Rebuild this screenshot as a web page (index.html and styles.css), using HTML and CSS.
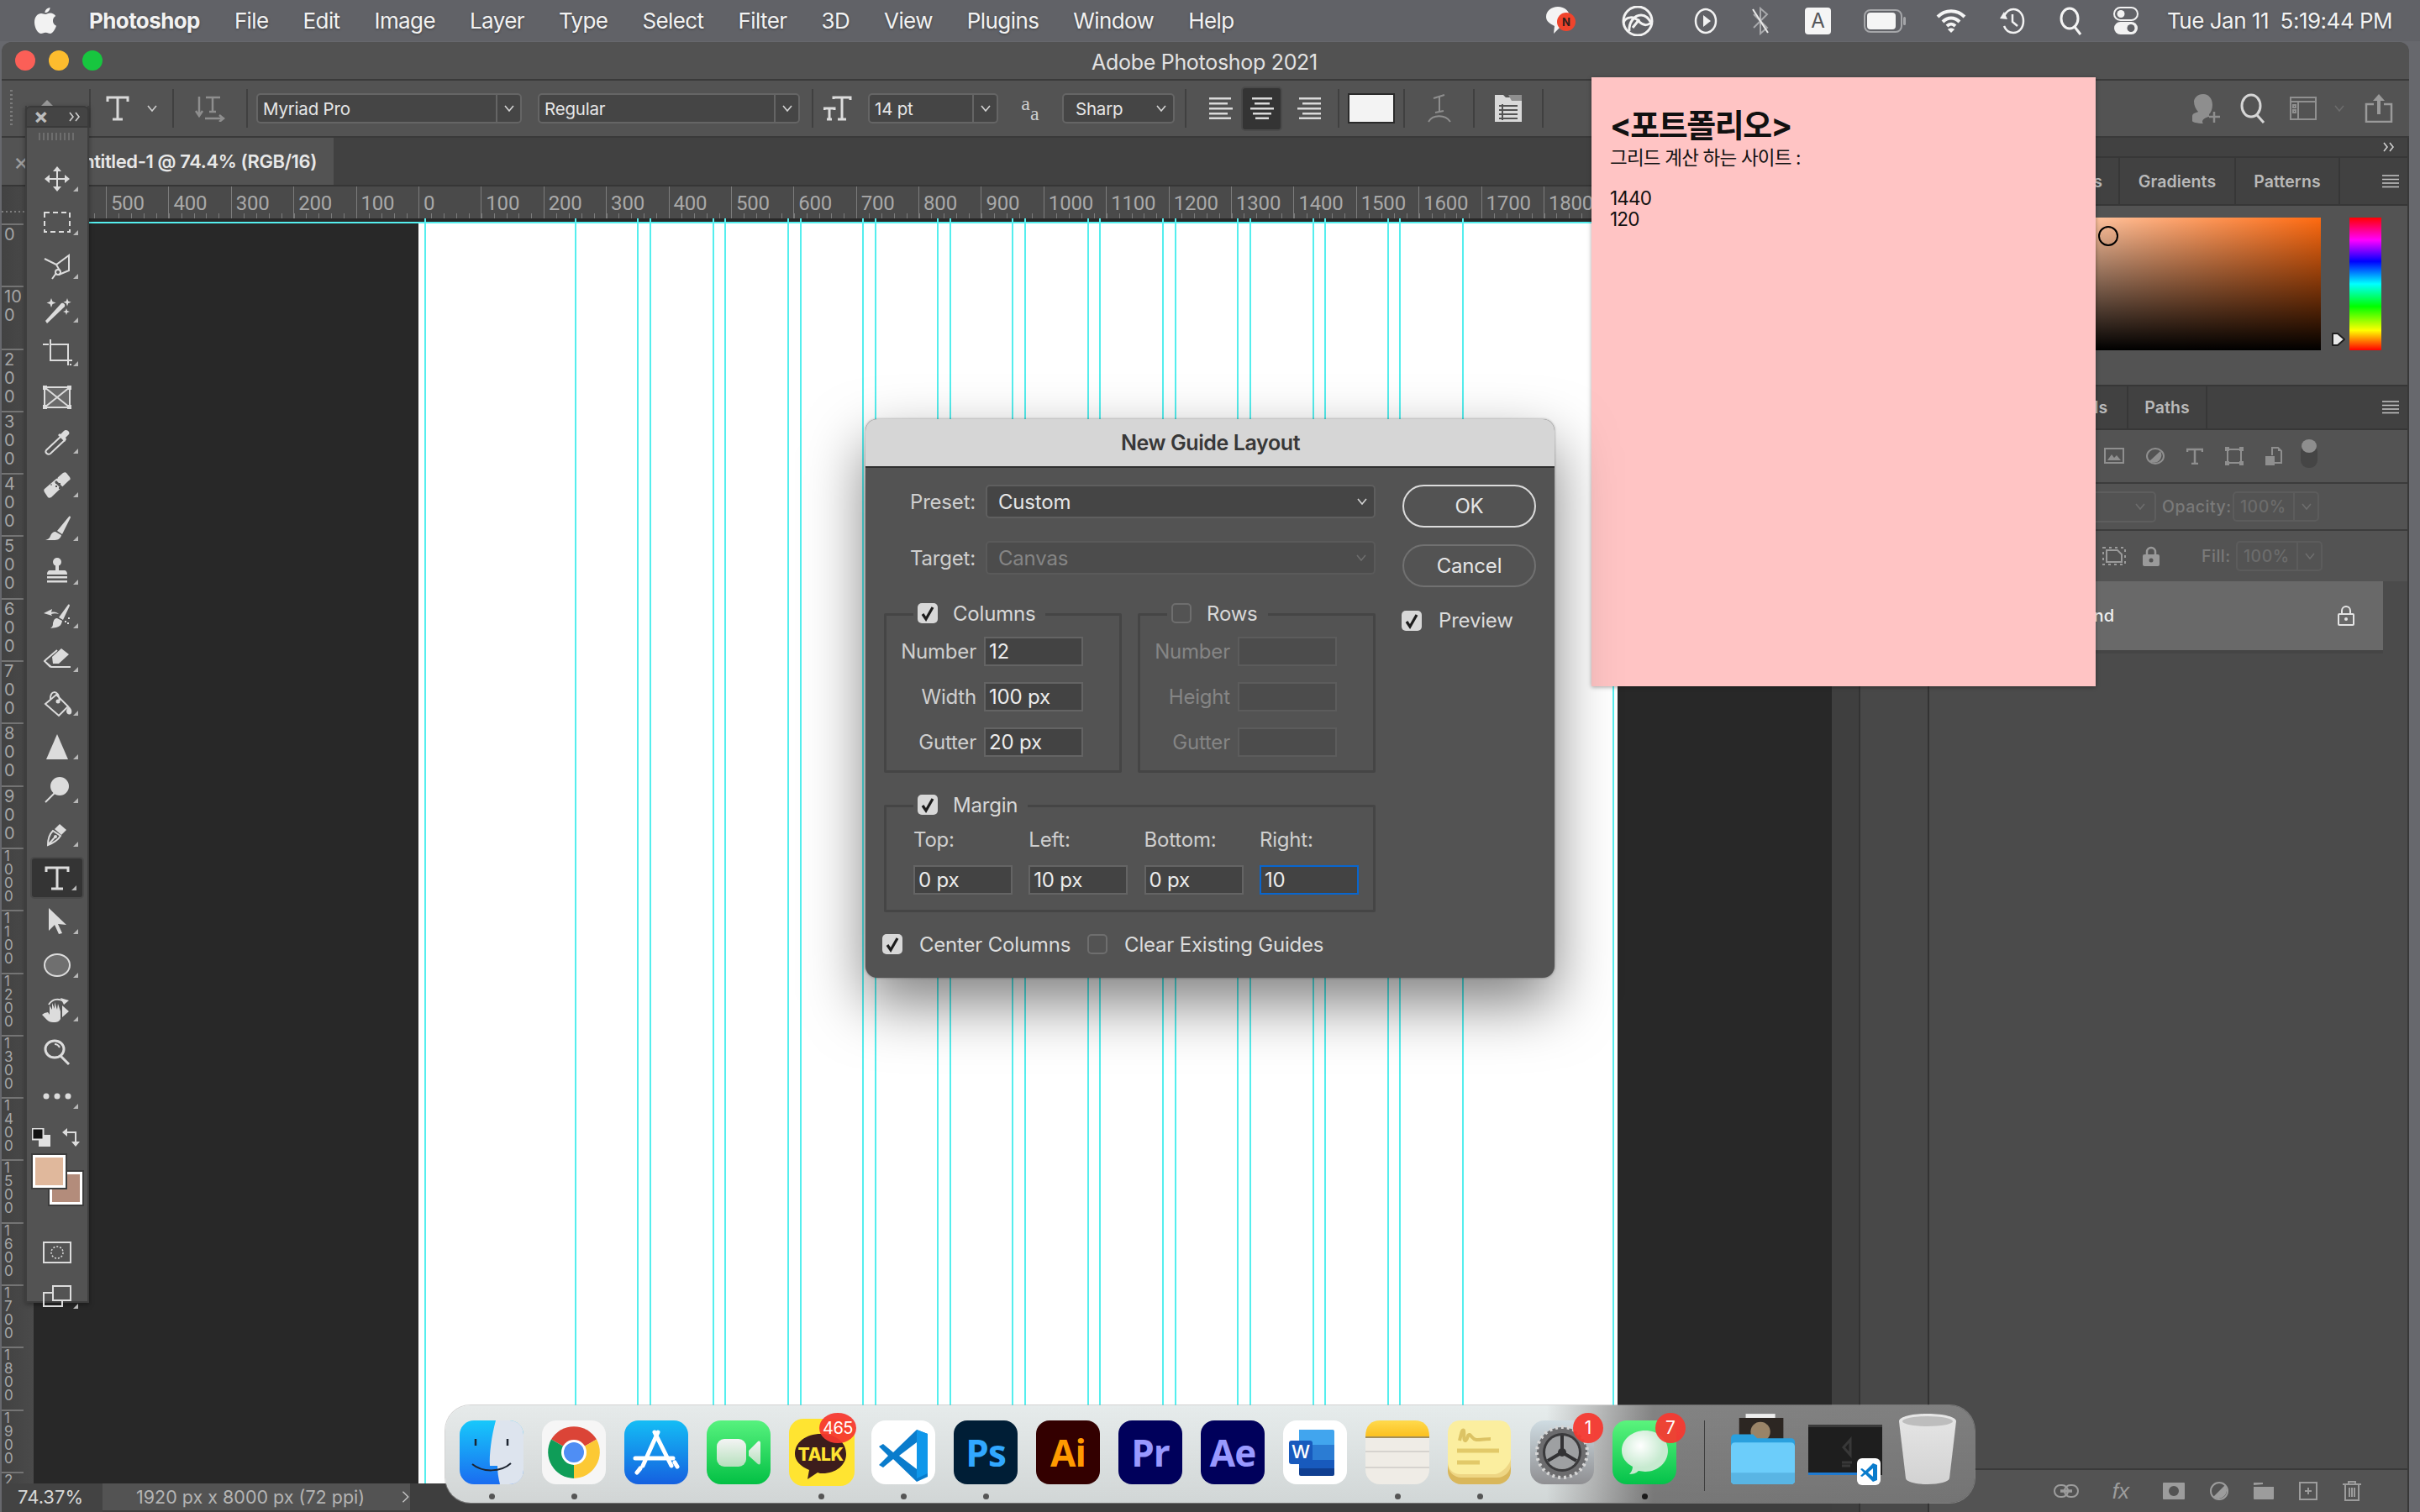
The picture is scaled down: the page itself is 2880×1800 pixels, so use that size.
FILE: index.html
```html
<!DOCTYPE html>
<html lang="en">
<head>
<meta charset="utf-8">
<title>Adobe Photoshop 2021</title>
<link rel="stylesheet" href="styles.css">
</head>
<body>
<header class="menubar">
  <svg class="apple" width="28" height="34" viewBox="0 0 28 34"><path fill="#f2f2f2" d="M19.5 1c.2 3-2.6 6.400-6 6.200C13.200 4.200 16.300 1.200 19.500 1zM14 9c1.500 0 3.300-1.500 6-1.500 2.200 0 4.800 1.200 6.200 3.500-4.800 2.800-4 9.800.8 11.800-1.200 3.500-4.200 9.200-7.200 9.200-1.900 0-2.800-1.300-5.500-1.300s-3.600 1.300-5.400 1.300C5 32 1 25 1 18.500 1 12 5 8 9 8c2 0 3.600 1 5 1z"/></svg>
  <nav class="menu">
    <b>Photoshop</b><span>File</span><span>Edit</span><span>Image</span><span>Layer</span><span>Type</span><span>Select</span><span>Filter</span><span>3D</span><span>View</span><span>Plugins</span><span>Window</span><span>Help</span>
  </nav>
  <div class="status-icons">
    <svg class="si" width="38" height="36" viewBox="0 0 38 36"><path fill="#f4f4f4" d="M16 1c8 0 14 5 14 12s-5 12-12 13l-7 7 1-9C6 21 2 18 2 13 2 6 8 1 16 1z"/><circle cx="26" cy="19" r="11" fill="#f0442c"/><text x="26" y="24" class="badge-n">N</text></svg>
    <svg class="si cc" width="40" height="36" viewBox="0 0 40 36" fill="none" stroke="#f2f2f2" stroke-width="3"><circle cx="20" cy="18" r="17"/><path d="M3 20c3-8 13-8 19-1 5 5 11 5 15-1M10 30c-1-10 6-19 14-19 6 0 9 4 12 9M14 26l8-10"/></svg>
    <svg class="si play" width="28" height="34" viewBox="0 0 28 34" fill="none" stroke="#f2f2f2" stroke-width="2.500"><ellipse cx="14" cy="17" rx="12" ry="14"/><path fill="#f2f2f2" stroke="none" d="M11 10l9 7-9 7z"/></svg>
    <svg class="si bt" width="22" height="34" viewBox="0 0 22 34" fill="none" stroke="#a8a9ac" stroke-width="2"><path d="M3 9l16 16-8 7V2l8 7L3 25"/><path stroke="#e8e8e8" d="M2 3l18 28"/></svg>
    <div class="si akey">A</div>
    <svg class="si batt" width="52" height="30" viewBox="0 0 52 30"><rect x="1" y="2" width="44" height="26" rx="7" fill="none" stroke="#a5a6a9" stroke-width="2"/><rect x="4" y="5" width="34" height="20" rx="4" fill="#f5f5f5"/><rect x="47" y="10" width="3" height="10" rx="1.500" fill="#a5a6a9"/></svg>
    <svg class="si wifi" width="36" height="30" viewBox="0 0 36 30" fill="none" stroke="#f4f4f4" stroke-width="4"><path d="M2 10C11 1 25 1 34 10M8 16c6-6 14-6 20 0M13 21c3-3 7-3 10 0"/><path fill="#f4f4f4" stroke="none" d="M18 29l-4-4c2-2 6-2 8 0z"/></svg>
    <svg class="si hist" width="30" height="34" viewBox="0 0 30 34" fill="none" stroke="#f2f2f2" stroke-width="2.500"><path d="M5 11C8 5 12 3 16 3c7 0 12 6 12 14s-5 14-12 14c-5 0-9-3-11-8"/><path d="M15 9v9l6 5"/><path fill="#f2f2f2" stroke="none" d="M0 14l9 1-4-9z"/></svg>
    <svg class="si srch" width="28" height="34" viewBox="0 0 28 34" fill="none" stroke="#f4f4f4" stroke-width="3"><ellipse cx="12" cy="14" rx="10" ry="12"/><path d="M18 24l7 9"/></svg>
    <svg class="si ctl" width="30" height="34" viewBox="0 0 30 34"><rect x="1" y="1" width="28" height="15" rx="7.500" fill="none" stroke="#f2f2f2" stroke-width="2"/><circle cx="9" cy="8.500" r="4.500" fill="#f2f2f2"/><rect x="1" y="18" width="28" height="15" rx="7.500" fill="#f2f2f2"/><circle cx="21" cy="25.500" r="4.500" fill="#5f6065"/></svg>
    <time class="clock">Tue Jan 11&nbsp;&nbsp;5:19:44 PM</time>
  </div>
</header>

<section class="window">
  <div class="titlebar">
    <i class="light red"></i><i class="light yellow"></i><i class="light green"></i>
    <div class="win-title">Adobe Photoshop 2021</div>
  </div>

  <div class="options">
    <div class="grip"></div>
    <svg class="oc" width="28" height="28" viewBox="0 0 28 28"><path fill="#9a9a9a" d="M14 4l12 12H2z"/><path fill="#9a9a9a" d="M6 16h16v10H6z"/></svg>
    <i class="osep"></i>
    <svg class="oc" width="30" height="30" viewBox="0 0 30 30" fill="none" stroke="#d9d9d9" stroke-width="3"><path d="M3 7V2h24v5M15 2v26M9 28h12"/></svg>
    <svg class="oc" width="12" height="9" viewBox="0 0 12 9" fill="none" stroke="#cfcfcf" stroke-width="1.600"><path d="M1 1l5 6 5-6"/></svg>
    <i class="osep"></i>
    <svg class="oc" width="36" height="32" viewBox="0 0 36 32" fill="none" stroke="#8e8e8e" stroke-width="2.500"><path d="M13 3h17M21 3v17M17 20h8M5 2v22M1 19l4 6 4-6M12 28h22M29 24l5 4-5 4"/></svg>
    <i class="osep flush"></i>
    <div class="osel grow"><span>Myriad Pro</span><em><svg class="chev"><use href="#chev"/></svg></em></div>
    <div class="osel style"><span>Regular</span><em><svg class="chev"><use href="#chev"/></svg></em></div>
    <i class="osep"></i>
    <svg class="oc" width="34" height="30" viewBox="0 0 34 30" fill="none" stroke="#dcdcdc" stroke-width="3"><path d="M12 4V2h20v3M22 2v26M17 28h10M1 17v-2h12v2M7 15v13M4 28h6"/></svg>
    <div class="osel size"><span>14 pt</span><em><svg class="chev"><use href="#chev"/></svg></em></div>
    <div class="aa oc"><span>a</span><span>a</span></div>
    <div class="osel sharp"><span>Sharp</span><svg class="chev"><use href="#chev"/></svg></div>
    <i class="osep"></i>
    <div class="alg left"><svg width="28" height="26" viewBox="0 0 28 26" fill="#dadada"><path d="M0 0h26v2.500H0zM0 6h22v2.500H0zM0 12h28v2.500H0zM0 18h22v2.500H0zM0 23.500h26V26H0z"/></svg></div>
    <div class="alg on"><svg width="28" height="26" viewBox="0 0 28 26" fill="#dadada"><path d="M2 0h24v2.500H2zM5 6h18v2.500H5zM0 12h28v2.500H0zM3 18h22v2.500H3zM6 23.500h16V26H6z"/></svg></div>
    <div class="alg"><svg width="28" height="26" viewBox="0 0 28 26" fill="#dadada"><path d="M2 0h26v2.500H2zM6 6h22v2.500H6zM0 12h28v2.500H0zM6 18h22v2.500H6zM2 23.500h26V26H2z"/></svg></div>
    <i class="osep"></i>
    <div class="swatch"></div>
    <i class="osep"></i>
    <svg class="oc" width="30" height="34" viewBox="0 0 30 34" fill="none" stroke="#8e8e8e" stroke-width="2"><path d="M8 5l13-4M15 3v18M10 22l10-2M2 33c5-9 20-9 26 0"/></svg>
    <i class="osep flush"></i>
    <svg class="oc" width="32" height="32" viewBox="0 0 32 32"><path fill="#d9d9d9" d="M0 0h10l3 3h19v29H0z"/><path fill="#8f8f8f" d="M16 0h16v7H20z"/><path stroke="#535353" stroke-width="2" d="M5 13h22M5 18h22M5 23h22M5 28h22M9 11v19"/></svg>
    <i class="osep flush"></i>
    <div></div>
    <svg class="oc" width="36" height="36" viewBox="0 0 36 36"><path fill="#8e8e8e" d="M15 1c7 0 11 6 11 13 0 5-2 9-4 11v3c-6 1-10 5-7 8-8 0-13-2-13-3v-6c0-3 5-4 7-5-3-3-5-8-5-12C4 6 8 1 15 1z"/><path stroke="#8e8e8e" stroke-width="2.500" d="M28 22v13M22 28h13"/></svg>
    <svg class="oc" width="30" height="36" viewBox="0 0 30 36" fill="none" stroke="#d6d6d6" stroke-width="3"><ellipse cx="13" cy="15" rx="11" ry="13"/><path d="M20 26l8 9"/></svg>
    <svg class="oc" width="32" height="28" viewBox="0 0 32 28" fill="none" stroke="#909090" stroke-width="2"><rect x="1" y="1" width="30" height="26"/><path d="M1 6h30M10 6v21M4 10h3v3H4zM4 16h3v3H4z"/></svg>
    <svg class="oc" width="12" height="8" viewBox="0 0 12 8" fill="none" stroke="#6d6d6d" stroke-width="1.600"><path d="M1 1l5 6 5-6"/></svg>
    <svg class="oc" width="34" height="34" viewBox="0 0 34 34" fill="none" stroke="#9a9a9a" stroke-width="2.500"><path d="M11 12H2v21h30V12h-9"/><path fill="#9a9a9a" stroke="none" d="M17 0l7 8h-5v16h-4V8h-5z"/></svg>
  </div>

  <div class="under">
    <div class="doc">
      <div class="tabrow">
        <div class="doctab"><span class="tabx">×</span><span class="tabname">Untitled-1 @ 74.4% (RGB/16)</span></div>
      </div>
      <div class="ruler-top">
        <div class="corner"></div>
        <div class="hruler">
          <span>600</span><span>500</span><span>400</span><span>300</span><span>200</span><span>100</span><span>0</span><span>100</span><span>200</span><span>300</span><span>400</span><span>500</span><span>600</span><span>700</span><span>800</span><span>900</span><span>1000</span><span>1100</span><span>1200</span><span>1300</span><span>1400</span><span>1500</span><span>1600</span><span>1700</span><span>1800</span><span>1900</span>
        </div>
      </div>
      <div class="doc-main">
        <div class="vruler">
          <span>0</span><span>100</span><span>200</span><span>300</span><span>400</span><span>500</span><span>600</span><span>700</span><span>800</span><span>900</span><span class="four">1000</span><span class="four">1100</span><span class="four">1200</span><span class="four">1300</span><span class="four">1400</span><span class="four">1500</span><span class="four">1600</span><span class="four">1700</span><span class="four">1800</span><span class="four">1900</span><span class="four">2000</span>
        </div>
        <div class="canvas">
          <div class="page"></div>
          <i class="hguide"></i>
          <i class="guide" style="left:465px"></i><i class="guide" style="left:644px"></i><i class="guide" style="left:718px"></i><i class="guide" style="left:733px"></i><i class="guide" style="left:808px"></i><i class="guide" style="left:822px"></i><i class="guide" style="left:897px"></i><i class="guide" style="left:912px"></i><i class="guide" style="left:986px"></i><i class="guide" style="left:1001px"></i><i class="guide" style="left:1075px"></i><i class="guide" style="left:1090px"></i><i class="guide" style="left:1164px"></i><i class="guide" style="left:1179px"></i><i class="guide" style="left:1254px"></i><i class="guide" style="left:1268px"></i><i class="guide" style="left:1343px"></i><i class="guide" style="left:1358px"></i><i class="guide" style="left:1432px"></i><i class="guide" style="left:1447px"></i><i class="guide" style="left:1522px"></i><i class="guide" style="left:1536px"></i><i class="guide" style="left:1611px"></i><i class="guide" style="left:1625px"></i><i class="guide" style="left:1700px"></i><i class="guide" style="left:1879px"></i>
        </div>
      </div>
      <div class="statusbar">
        <span class="zoomval">74.37%</span>
        <span class="docinfo">1920 px x 8000 px (72 ppi)<svg width="14" height="22" viewBox="0 0 14 22" fill="none" stroke="#c4c4c4" stroke-width="2"><path d="M2 2l9 9-9 9"/></svg></span>
      </div>
    </div>
    <div class="dock-a"></div>
    <div class="dock-b"></div>
    <div class="panels">
      <div class="collapse-bar"><svg width="14" height="14" viewBox="0 0 14 14" fill="none" stroke="#cfcfcf" stroke-width="1.600"><path d="M1 2l4 5-4 5M8 2l4 5-4 5"/></svg></div>
      <div class="ptabs first">
        <span class="t-color">Color</span><span class="t-swatch">Swatches</span><span class="t-grad">Gradients</span><span class="t-pat">Patterns</span>
        <svg class="burger"><use href="#burger"/></svg>
      </div>
      <div class="colorpanel">
        <div class="picker"><i class="pick-dot"></i></div>
        <div class="huewrap">
          <svg class="hue-arrow" width="18" height="18" viewBox="0 0 18 18"><path fill="#e8e8e8" stroke="#1f1f1f" stroke-width="2" stroke-linejoin="round" d="M2 2h6l8 7-8 7H2z"/></svg>
          <div class="hue"></div>
        </div>
      </div>
      <div class="ptabs second">
        <span class="t-layers">Layers</span><span class="t-chan">Channels</span><span class="t-paths">Paths</span>
        <svg class="burger"><use href="#burger"/></svg>
      </div>
      <div class="filter-row">
        <svg class="fic" width="24" height="20" viewBox="0 0 24 20"><rect x="1" y="1" width="22" height="17" fill="none" stroke="#8f8f8f" stroke-width="2"/><path fill="#8f8f8f" d="M4 15l5-7 3 4 3-3 5 6z"/></svg>
        <svg class="fic" width="22" height="20" viewBox="0 0 22 20"><ellipse cx="11" cy="10" rx="10" ry="9" fill="none" stroke="#8f8f8f" stroke-width="2"/><path fill="#8f8f8f" d="M17 4a9 9 0 0 1-13 12z"/></svg>
        <svg class="fic" width="20" height="20" viewBox="0 0 20 20" fill="none" stroke="#8f8f8f" stroke-width="2.500"><path d="M1 5V2h18v3M10 2v17M6 19h8"/></svg>
        <svg class="fic" width="22" height="22" viewBox="0 0 22 22" fill="none" stroke="#8f8f8f" stroke-width="2"><rect x="3" y="3" width="16" height="16"/><path fill="#8f8f8f" stroke="none" d="M0 0h5v5H0zM17 0h5v5h-5zM0 17h5v5H0zM17 17h5v5h-5z"/></svg>
        <svg class="fic" width="20" height="22" viewBox="0 0 20 22"><path fill="none" stroke="#8f8f8f" stroke-width="2" d="M8 10V1h7l4 4v14h-8"/><path fill="#8f8f8f" d="M0 11h11v11H0zM15 1l4 4h-4z"/></svg>
        <div class="pill-toggle"><i></i></div>
      </div>
      <div class="blend-row">
        <div class="blend-sel"><svg class="chev dim"><use href="#chev"/></svg></div>
        <span class="dim-label">Opacity:</span>
        <div class="pct"><span>100%</span><em><svg class="chev dim"><use href="#chev"/></svg></em></div>
      </div>
      <div class="lock-row">
        <svg class="lk1" width="28" height="22" viewBox="0 0 28 22" fill="none" stroke="#9a9a9a" stroke-width="2"><path d="M5 4h13l5 5v9H5z"/><path stroke-dasharray="3 4" d="M1 1h26v20H1z"/></svg>
        <svg class="lk2" width="20" height="24" viewBox="0 0 20 24"><path fill="none" stroke="#9a9a9a" stroke-width="2.500" d="M5 11V7a5 5 0 0 1 10 0v4"/><rect y="10" width="20" height="14" rx="2" fill="#9a9a9a"/><circle cx="10" cy="17" r="2.500" fill="#535353"/></svg>
        <span class="dim-label fill-l">Fill:</span>
        <div class="pct"><span>100%</span><em><svg class="chev dim"><use href="#chev"/></svg></em></div>
      </div>
      <div class="layer-list">
        <div class="layer-row">
          <span class="layer-name">Background</span>
          <svg width="20" height="24" viewBox="0 0 20 24"><path fill="none" stroke="#e4e4e4" stroke-width="2" d="M5 10V6a5 5 0 0 1 10 0v4"/><rect x="1" y="10" width="18" height="13" rx="1" fill="none" stroke="#e4e4e4" stroke-width="2"/><circle cx="10" cy="16" r="2" fill="#e4e4e4"/></svg>
        </div>
      </div>
      <div class="panel-foot">
        <svg width="30" height="16" viewBox="0 0 30 16" fill="none" stroke="#9c9c9c" stroke-width="2"><rect x="1" y="1" width="16" height="14" rx="7"/><rect x="13" y="1" width="16" height="14" rx="7"/><path stroke-width="3.500" d="M8 8h14"/></svg>
        <span class="fx">fx</span>
        <svg width="26" height="20" viewBox="0 0 26 20"><rect width="26" height="20" rx="1" fill="#9c9c9c"/><circle cx="13" cy="10" r="6" fill="#535353"/></svg>
        <svg width="22" height="22" viewBox="0 0 22 22"><circle cx="11" cy="11" r="10" fill="none" stroke="#9c9c9c" stroke-width="2"/><path fill="#9c9c9c" d="M18 4a10 10 0 0 1-14 14z"/></svg>
        <svg width="24" height="20" viewBox="0 0 24 20" fill="#9c9c9c"><path d="M0 5h24v14a1 1 0 0 1-1 1H1a1 1 0 0 1-1-1zM0 3V0h11v2z"/></svg>
        <svg width="22" height="22" viewBox="0 0 22 22" fill="none" stroke="#9c9c9c" stroke-width="2"><rect x="1" y="1" width="20" height="20"/><path d="M11 7v8M7 11h8"/></svg>
        <svg width="22" height="24" viewBox="0 0 22 24" fill="none" stroke="#9c9c9c" stroke-width="2"><path d="M0 4h22M7 3V1h8v2M3 4v19h16V4M8 8v11M11 8v11M14 8v11"/></svg>
      </div>
    </div>
  </div>
</section>

<aside class="toolbox">
  <div class="tb-head"><span class="tb-x">×</span><svg width="14" height="14" viewBox="0 0 14 14" fill="none" stroke="#cfcfcf" stroke-width="1.600"><path d="M1 2l4 5-4 5M8 2l4 5-4 5"/></svg></div>
  <div class="tb-grip"></div>
  <div class="tool more"><svg class="ti" viewBox="0 0 36 36"><path d="M18 4v28M4 18h28" class="s"/><path d="M18 3l5 6H13zM18 33l5-6H13zM3 18l6-5v10zM33 18l-6-5v10z"/></svg></div>
  <div class="tool more"><svg class="ti" viewBox="0 0 36 36"><rect x="3" y="6" width="30" height="23" class="s" stroke-dasharray="6 4"/></svg></div>
  <div class="tool more"><svg class="ti" viewBox="0 0 36 36"><path class="s" d="M3 9l14 7L32 5v18l-12 5M17 16l4 7M12 33l5-7"/><circle class="s" cx="19" cy="25" r="3"/></svg></div>
  <div class="tool more"><svg class="ti" viewBox="0 0 36 36"><path d="M4 31l2 3 21-20c1-3-2-5-4-4z"/><path d="M11 4l1.500 4 4 1.500-4 1.500-1.500 4-1.500-4-4-1.500 4-1.500zM30 4l1.200 3.500 3.500 1.200-3.500 1.200L30 13.500l-1.200-3.600-3.500-1.200 3.500-1.200zM29 16l1 3 3 1-3 1-1 3-1-3-3-1 3-1z"/></svg></div>
  <div class="tool more"><svg class="ti" viewBox="0 0 36 36"><path class="s" d="M1 7h7M10 1v25h24M34 32v-2M10 7h21v25M36 26h-6"/></svg></div>
  <div class="tool"><svg class="ti" viewBox="0 0 36 36"><path fill="#6a6a6a" d="M3 6h30v24H3z"/><path class="s" d="M3 6h30v24H3zM3 6l30 24M33 6L3 30"/><path d="M1 4h5v5H1zM30 4h5v5h-5zM1 27h5v5H1zM30 27h5v5h-5z"/></svg></div>
  <div class="tool more"><svg class="ti" viewBox="0 0 36 36"><path class="s" d="M22 13L5 29c-2 3 2 6 5 4l17-16"/><path d="M19 11l8 8 2-3-1-2 4-4c2-3-3-7-6-4l-4 4-1-1z"/></svg></div>
  <div class="tool more"><svg class="ti" viewBox="0 0 36 36"><path d="M3 23L25 4c2-1 3-1 4 0l4 5c1 2 1 3-1 4L11 33c-2 1-3 1-4 0l-4-6c-1-2-1-3 0-4z"/><path fill="#535353" d="M15 15l2-2 9 9-2 2zM10 18l1-1 1 1-1 1zM17 10l1-1 1 1-1 1z"/><path d="M16 19h2v2h-2zM20 16h2v2h-2zM20 21h2v2h-2zM16 15h2v2h-2z" fill="#535353"/></svg></div>
  <div class="tool more"><svg class="ti" viewBox="0 0 36 36"><path d="M18 21L32 4c1-1 2 0 2 1L24 25zM16 22l7 4c-1 5-5 6-9 6H4c3-1 5-2 6-5 1-3 3-5 6-5z"/></svg></div>
  <div class="tool more"><svg class="ti" viewBox="0 0 36 36"><circle cx="18" cy="6" r="5"/><path d="M16 10h4v6h6c3 0 4 2 4 5H6c0-3 1-5 4-5h6zM6 23h24v2.500H6zM6 28h24v2.500H6z"/></svg></div>
  <div class="tool more"><svg class="ti" viewBox="0 0 36 36"><path d="M20 20L31 5c1-1 2 0 2 1l-8 17zM18 21l6 3c-1 6-4 7-7 8l-7 1c3-2 3-4 3-6 1-4 2-6 5-6zM2 15l10-5-1 4c4-1 7 0 9 2-3-1-6-1-9 0l1 2z"/><path d="M27 24h2v2h-2zM31 20h2v2h-2zM30 26h2v2h-2z"/></svg></div>
  <div class="tool more"><svg class="ti" viewBox="0 0 36 36"><path d="M12 15l11-10 9 7-12 11H13z" /><path class="s" d="M5 18L18 7M4 21l7 6h23M5 18l-2 2 7 7"/></svg></div>
  <div class="tool more"><svg class="ti" viewBox="0 0 36 36"><path class="s" d="M4 19L17 8l14 14-11 11zM10 14c-1-11 9-13 11 1"/><circle cx="19" cy="16" r="2.500"/><path d="M32 22c3 3 4 5 3 8-2 3-6 1-6-2 0-2 1-4 3-6z"/></svg></div>
  <div class="tool more"><svg class="ti" viewBox="0 0 36 36"><path d="M18 3l13 30H5z"/></svg></div>
  <div class="tool more"><svg class="ti" viewBox="0 0 36 36"><circle cx="21" cy="13" r="11"/><path class="s" d="M15 21L4 32"/></svg></div>
  <div class="tool more"><svg class="ti" viewBox="0 0 36 36"><path class="s" d="M7 31c0-8 2-13 6-17l9 6c-3 5-7 8-15 11zM7 31l9-10"/><path d="M15 12l6-6 8 7-6 6z"/><circle cx="16" cy="21" r="2"/></svg></div>
  <div class="tool on more"><svg class="ti" viewBox="0 0 36 36"><path class="s b" d="M5 11V6h26v5M18 6v25M11 31h14"/></svg></div>
  <div class="tool more"><svg class="ti" viewBox="0 0 36 36"><path d="M8 2l21 20-10-1 5 11-4 1-5-11-7 7z"/></svg></div>
  <div class="tool more"><svg class="ti" viewBox="0 0 36 36"><ellipse cx="18" cy="18" rx="15" ry="13" fill="#6f6f6f" stroke="#dcdcdc" stroke-width="2"/></svg></div>
  <div class="tool more"><svg class="ti" viewBox="0 0 36 36"><path class="s" d="M8 13C12 6 20 5 26 9"/><path d="M22 5l10 3-6 5zM24 14l8 7-8 7zM3 23l4-1 2 3V14l3 5V11l3 7v-8l3 9 1-7 3 9v9c-2 4-5 4-9 4-6 0-9-5-13-9z"/></svg></div>
  <div class="tool"><svg class="ti" viewBox="0 0 36 36"><ellipse cx="15" cy="14" rx="11" ry="10" class="s b"/><path class="s b" d="M22 22l10 10"/><path class="s" d="M15 8c3 0 5 2 6 4"/></svg></div>
  <div class="tool more"><svg class="ti" viewBox="0 0 36 36"><circle cx="5" cy="18" r="3.500"/><circle cx="18" cy="18" r="3.500"/><circle cx="31" cy="18" r="3.500"/></svg></div>
  <div class="colors">
    <div class="defaults">
      <svg width="22" height="22" viewBox="0 0 22 22"><rect x="8" y="8" width="14" height="14" fill="#e0e0e0"/><rect x="0.500" y="0.500" width="13" height="13" fill="#111" stroke="#e0e0e0" stroke-width="2"/></svg>
      <svg width="22" height="22" viewBox="0 0 22 22" fill="none" stroke="#dcdcdc" stroke-width="2"><path d="M3 5h13v13"/><path fill="#dcdcdc" stroke="none" d="M0 5l6-5v10zM11 16h10l-5 6z"/></svg>
    </div>
    <div class="fgbg"><i class="bg"></i><i class="fg"></i></div>
  </div>
  <div class="tool small"><svg width="34" height="26" viewBox="0 0 34 26" fill="none" stroke="#dcdcdc" stroke-width="2"><rect x="1" y="1" width="32" height="24"/><circle cx="17" cy="13" r="7" stroke-width="1.500" stroke-dasharray="2 2"/></svg></div>
  <div class="tool more"><svg width="34" height="26" viewBox="0 0 34 26" fill="none" stroke="#dcdcdc" stroke-width="2"><path d="M12 9H1v16h22v-7"/><rect x="12" y="1" width="21" height="17"/></svg></div>
</aside>

<article class="note">
  <h1>&lt;포트폴리오&gt;</h1>
  <p>그리드 계산 하는 사이트 :</p>
  <p class="gap">1440</p>
  <p>120</p>
</article>

<div class="dialog">
  <div class="dlg-title">New Guide Layout</div>
  <div class="dlg-body">
    <div class="dlg-main">
      <div class="frow"><label>Preset:</label><div class="dsel"><span>Custom</span><svg class="chev"><use href="#chev"/></svg></div></div>
      <div class="frow off"><label>Target:</label><div class="dsel"><span>Canvas</span><svg class="chev dim"><use href="#chev"/></svg></div></div>
      <div class="group-pair">
        <div class="group">
          <div class="legend"><i class="cb on"><svg><use href="#check"/></svg></i><span>Columns</span></div>
          <div class="grow-row"><label>Number</label><div class="inp">12</div></div>
          <div class="grow-row"><label>Width</label><div class="inp">100 px</div></div>
          <div class="grow-row"><label>Gutter</label><div class="inp">20 px</div></div>
        </div>
        <div class="group off">
          <div class="legend"><i class="cb"></i><span>Rows</span></div>
          <div class="grow-row"><label>Number</label><div class="inp"></div></div>
          <div class="grow-row"><label>Height</label><div class="inp"></div></div>
          <div class="grow-row"><label>Gutter</label><div class="inp"></div></div>
        </div>
      </div>
      <div class="group margin">
        <div class="legend"><i class="cb on"><svg><use href="#check"/></svg></i><span>Margin</span></div>
        <div class="mgrid">
          <label>Top:</label><label>Left:</label><label>Bottom:</label><label>Right:</label>
          <div class="inp">0 px</div><div class="inp">10 px</div><div class="inp">0 px</div><div class="inp focus">10</div>
        </div>
      </div>
      <div class="dlg-bottom">
        <i class="cb on"><svg><use href="#check"/></svg></i><span class="lb1">Center Columns</span>
        <i class="cb"></i><span>Clear Existing Guides</span>
      </div>
    </div>
    <div class="dlg-side">
      <div class="btn primary">OK</div>
      <div class="btn">Cancel</div>
      <div class="prev"><i class="cb on"><svg><use href="#check"/></svg></i><span>Preview</span></div>
    </div>
  </div>
</div>

<footer class="mac-dock">
  <div class="app run">
    <svg viewBox="0 0 76 76"><defs><linearGradient id="fa" x1="0" y1="0" x2="0" y2="1"><stop offset="0" stop-color="#17c8fb"/><stop offset="1" stop-color="#1a6cf0"/></linearGradient></defs><rect x="0" y="0" width="76" height="76" rx="17" fill="url(#fa)"/><path fill="#dde4ee" d="M43 0h16c10 0 17 7 17 17v42c0 10-7 17-17 17H48c-2-8-3-15-3-22H36c-1-13 2-36 7-54z"/><path stroke="#1c2430" stroke-width="2" fill="none" d="M15 52c12 10 34 10 46-1"/><path stroke="#1c2430" stroke-width="2.500" d="M19 22v8M57 22v8"/></svg>
  </div>
  <div class="app run">
    <svg viewBox="0 0 76 76"><rect width="76" height="76" rx="17" fill="#f6f6f6"/><path fill="#db4437" d="M38 38L11 22.500A31.500 31.500 0 0 1 65 22.500z"/><path fill="#fcc934" d="M38 38L65 22.500A31.500 31.500 0 0 1 38 69z"/><path fill="#0f9d58" d="M38 38L38 69A31.500 31.500 0 0 1 11 22.500z"/><circle cx="38" cy="38" r="15" fill="#fff"/><circle cx="38" cy="38" r="12" fill="#4f8ef4"/></svg>
  </div>
  <div class="app">
    <svg viewBox="0 0 76 76"><defs><linearGradient id="as" x1="0" y1="0" x2="0" y2="1"><stop offset="0" stop-color="#14bdf5"/><stop offset="1" stop-color="#1560e0"/></linearGradient></defs><rect width="76" height="76" rx="17" fill="url(#as)"/><path stroke="#fff" stroke-width="5" stroke-linecap="round" fill="none" d="M40 14L22 54M36 14L56 54M13 45h45M19 57c-2 3-3 4-4 5M60 50l3 5"/></svg>
  </div>
  <div class="app">
    <svg viewBox="0 0 76 76"><defs><linearGradient id="ft" x1="0" y1="0" x2="0" y2="1"><stop offset="0" stop-color="#57f27e"/><stop offset="1" stop-color="#03c044"/></linearGradient><linearGradient id="fw" x1="0" y1="0" x2="0" y2="1"><stop offset="0" stop-color="#f4f4f4"/><stop offset="1" stop-color="#b6e0bd"/></linearGradient></defs><rect width="76" height="76" rx="17" fill="url(#ft)"/><rect x="12" y="22" width="35" height="33" rx="9" fill="url(#fw)"/><path fill="url(#fw)" d="M50 36l11-11c2-1 3 0 3 2v23c0 2-1 3-3 2L50 42z"/></svg>
  </div>
  <div class="app run">
    <svg viewBox="0 0 76 76" class="talk"><rect y="-2" width="78" height="80" rx="17" fill="#ffe431"/><path fill="#3d1d1c" d="M38 16c18 0 30 10 30 24 0 13-12 23-28 23-2 0-4 0-6-1L22 70l2-11C14 55 7 48 7 40c0-14 13-24 31-24z"/><text x="37.500" y="48" class="talk-t">TALK</text></svg>
    <b class="bdg wide">465</b>
  </div>
  <div class="app run">
    <svg viewBox="0 0 76 76"><rect width="76" height="76" rx="17" fill="#fff"/><path fill="#0a7ccc" d="M54 11L26 38 14 28l-5 3 11 11-11 11 5 3 12-10 28 27 13-6V16z"/><path fill="#0f97ea" d="M54 11l13 5v47l-13 6z"/><path fill="#fff" d="M54 26L33 42l21 16z"/></svg>
  </div>
  <div class="app run">
    <svg viewBox="0 0 76 76"><rect width="76" height="76" rx="16" fill="#001e36"/><text x="38" y="55" class="adobe ps">Ps</text></svg>
  </div>
  <div class="app">
    <svg viewBox="0 0 76 76"><rect width="76" height="76" rx="16" fill="#330000"/><text x="38" y="55" class="adobe ai">Ai</text></svg>
  </div>
  <div class="app">
    <svg viewBox="0 0 76 76"><rect width="76" height="76" rx="16" fill="#00005b"/><text x="38" y="55" class="adobe pr">Pr</text></svg>
  </div>
  <div class="app">
    <svg viewBox="0 0 76 76"><rect width="76" height="76" rx="16" fill="#00005b"/><text x="38" y="55" class="adobe ae">Ae</text></svg>
  </div>
  <div class="app">
    <svg viewBox="0 0 76 76"><rect width="76" height="76" rx="16" fill="#fff"/><path fill="#41a5ee" d="M19 11h40a2 2 0 0 1 2 2v16H19z"/><path fill="#2b7cd3" d="M19 29h42v18H19z"/><path fill="#185abd" d="M19 47h42v10H19z"/><path fill="#103f91" d="M19 57h42v7a2 2 0 0 1-2 2H21a2 2 0 0 1-2-2z"/><rect x="7" y="24" width="28" height="28" rx="3" fill="#185abd"/><text x="21" y="45" class="word-w">W</text></svg>
  </div>
  <div class="app run">
    <svg viewBox="0 0 76 76"><defs><linearGradient id="nt" x1="0" y1="0" x2="0" y2="1"><stop offset="0" stop-color="#ffda4d"/><stop offset="1" stop-color="#fbbf1e"/></linearGradient></defs><rect width="76" height="76" rx="17" fill="#efece6"/><path fill="url(#nt)" d="M0 19C0 6 7 0 17 0h42c10 0 17 6 17 19v1H0z"/><path fill="#a5905b" d="M0 19h76v2H0z"/><path fill="#d6d3cf" d="M0 36h76v2H0zM0 55h76v2H0z"/></svg>
  </div>
  <div class="app run">
    <svg viewBox="0 0 76 76"><rect y="10" width="75" height="66" rx="16" fill="#d9b75b"/><rect y="4" width="75" height="64" rx="16" fill="#eed684"/><path fill="#fbee9f" d="M15 0h45c10 0 15 6 15 15v30c0 7-12 19-19 19H15C6 64 0 58 0 49V15C0 6 6 0 15 0z"/><path fill="none" stroke="#dcc364" stroke-width="4" d="M14 24c2-8 3-14 5-12 1 4-1 12 2 12 3-1 2-8 5-7 3 2 3 5 8 6 5 0 12-1 17-1"/><path stroke="#e2c969" stroke-width="5" d="M11 36h50M11 50h27"/></svg>
  </div>
  <div class="app">
    <svg viewBox="0 0 76 76"><defs><linearGradient id="st" x1="0" y1="0" x2="0" y2="1"><stop offset="0" stop-color="#cfdce2"/><stop offset="1" stop-color="#8f8f92"/></linearGradient></defs><rect width="76" height="76" rx="17" fill="url(#st)"/><circle cx="38" cy="38" r="30" fill="#6c6c6e"/><circle cx="38" cy="38" r="30" fill="none" stroke="#d6d6d6" stroke-width="4" stroke-dasharray="3 4"/><circle cx="38" cy="38" r="23" fill="#3a3a3c"/><circle cx="38" cy="38" r="20" fill="#9ea0a2"/><path stroke="#323234" stroke-width="4" d="M38 38V18M38 38L21 48M38 38L55 48"/><circle cx="38" cy="38" r="5" fill="#323234"/></svg>
    <b class="bdg">1</b>
  </div>
  <div class="app run black">
    <svg viewBox="0 0 76 76"><defs><linearGradient id="ms" x1="0" y1="0" x2="0" y2="1"><stop offset="0" stop-color="#5bf47d"/><stop offset="1" stop-color="#04c24a"/></linearGradient><radialGradient id="mb" cx=".4" cy=".35"><stop offset="0" stop-color="#fff"/><stop offset="1" stop-color="#c7ead0"/></radialGradient></defs><rect width="76" height="76" rx="17" fill="url(#ms)"/><path fill="url(#mb)" d="M39 12c15 0 27 10 27 24S54 61 39 61c-3 0-5-1-8-1-3 3-7 4-11 4 2-2 4-5 4-9-8-4-13-11-13-19 0-14 13-24 28-24z"/></svg>
    <b class="bdg">7</b>
  </div>
  <i class="dock-div"></i>
  <div class="app">
    <svg viewBox="0 0 78 86" class="tall"><rect x="18" y="0" width="36" height="30" fill="#eee"/><rect x="10" y="5" width="54" height="36" fill="#2c2622"/><circle cx="36" cy="22" r="12" fill="#9a8468"/><path fill="#2aa0de" d="M0 30c0-3 2-5 5-5h22l5 5h42c2 0 4 2 4 4v48c0 2-2 4-4 4H4c-2 0-4-2-4-4z"/><path fill="#6ccdfa" d="M0 40c0-3 2-5 5-5h68c3 0 5 2 5 5v42c0 2-2 4-4 4H4c-2 0-4-2-4-4z"/><path fill="#59b5e4" d="M0 72h78v10c0 2-2 4-4 4H4c-2 0-4-2-4-4z"/></svg>
  </div>
  <div class="app">
    <svg viewBox="0 0 88 72" class="wide-thumb"><rect y="0" width="88" height="60" fill="#1e1e1e"/><rect width="88" height="3" fill="#3a3a3a"/><rect y="57" width="62" height="3" fill="#1f7ad0"/><path stroke="#383838" stroke-width="3" fill="none" d="M50 18l-8 9 8 9V18zM40 45h12M40 49h10"/><rect x="58" y="40" width="28" height="32" rx="6" fill="#fff"/><path fill="#0a7ccc" d="M77 46l-9 9-4-3-2 1 4 4-4 4 2 1 4-3 9 9 5-2V48z"/><path fill="#fff" d="M77 52l-6 5 6 5z"/></svg>
  </div>
  <div class="app">
    <svg viewBox="0 0 70 84" class="tall"><defs><linearGradient id="tr" x1="0" y1="0" x2="0" y2="1"><stop offset="0" stop-color="#e6e6e6"/><stop offset="1" stop-color="#d2d2d2"/></linearGradient></defs><path fill="url(#tr)" d="M1 9c0-5 14-9 34-9s34 4 34 9l-8 68c-1 4-12 7-26 7S10 81 9 77z"/><ellipse cx="35" cy="9" rx="30" ry="6" fill="#bdbdbd"/></svg>
  </div>
</footer>

<svg class="defs" width="0" height="0">
  <symbol id="chev" viewBox="0 0 12 9"><path d="M1 1l5 6 5-6" fill="none" stroke="currentColor" stroke-width="1.600"/></symbol>
  <symbol id="burger" viewBox="0 0 20 16"><path d="M0 1h20M0 5.500h20M0 10h20M0 14.500h20" stroke="#c6c6c6" stroke-width="1.400"/></symbol>
  <symbol id="check" viewBox="0 0 24 24"><path d="M6 13l4 6 8-14" fill="none" stroke="#1c1c1c" stroke-width="3.200"/></symbol>
</svg>
</body>
</html>
```

FILE: styles.css
```css
* { box-sizing: border-box; }
html, body { margin: 0; padding: 0; }
body {
  width: 2880px; height: 1800px; overflow: hidden; position: relative;
  background: #67686d;
  font-family: Inter, "Noto Sans CJK KR", sans-serif;
  color: #e4e4e4;
}
i, em { font-style: normal; }

/* macOS menu bar */
.menubar { height: 49px; display: flex; align-items: center; background: #616267; padding-left: 40px; }
.apple { flex: none; }
.menu { display: flex; gap: 41px; margin-left: 38px; font-size: 26px; color: #f2f2f2; letter-spacing: -0.6px; text-shadow: 0 1px 3px rgba(0,0,0,.35); }
.menu b { font-weight: 700; }
.status-icons { margin-left: auto; display: flex; align-items: center; height: 100%; position: relative; width: 1042px; margin-right: 0; }
.si { flex: none; }
.status-icons .si:nth-child(1) { margin-left: 0; }
.cc { margin-left: 53px; }
.play { margin-left: 47px; }
.bt { margin-left: 40px; }
.akey { margin-left: 42px; width: 31px; height: 32px; border-radius: 4px; background: #f5f5f5; color: #55565a; font-size: 24px; display: flex; align-items: center; justify-content: center; }
.batt { margin-left: 39px; }
.wifi { margin-left: 34px; }
.hist { margin-left: 40px; }
.srch { margin-left: 41px; }
.ctl { margin-left: 36px; }
.clock { margin-left: 34px; font-size: 26px; color: #f2f2f2; letter-spacing: -0.5px; white-space: nowrap; text-shadow: 0 1px 3px rgba(0,0,0,.35); }
.badge-n { font-size: 13px; font-weight: 700; fill: #30201c; text-anchor: middle; }

/* Photoshop window */
.window { position: absolute; left: 2px; top: 50px; width: 2865px; height: 1750px; background: #535353; border-radius: 12px 12px 0 0; display: flex; flex-direction: column; overflow: hidden; }
.titlebar { flex: none; height: 44px; display: flex; align-items: center; padding-left: 16px; gap: 16px; position: relative; background: #525252; }
.light { width: 24px; height: 24px; border-radius: 50%; display: block; }
.light.red { background: #fb5f57; }
.light.yellow { background: #fdbc2e; }
.light.green { background: #17c63f; }
.win-title { position: absolute; left: 0; right: 0; top: 0; line-height: 48px; text-align: center; font-size: 25px; color: #e2e2e2; letter-spacing: -0.3px; padding-right: 2px; }

.options {
  flex: none; height: 70px; border-top: 2px solid #3a3a3a; border-bottom: 2px solid #3a3a3a;
  display: grid; align-items: center; justify-items: center;
  grid-template-columns: 22px 64px 20px 64px 18px 17px 86px 2px 326px 331px 16px 58px 162px 76px 134px 14px 65px 49px 56px 12px 66px 12px 81px 2px 79px 3px 1fr 56px 56px 64px 22px 72px;
}
.grip { width: 3px; height: 44px; justify-self: start; margin-left: 10px; background: repeating-linear-gradient(#7a7a7a 0 2px, transparent 2px 5px); }
.osep { display: block; width: 2px; height: 46px; background: #404040; justify-self: end; }
.osep.flush { justify-self: center; }
.oc { display: block; }
.osel { height: 36px; border: 2px solid #656565; border-radius: 5px; background: #454545; display: flex; align-items: center; justify-self: end; font-size: 20.5px; color: #e6e6e6; letter-spacing: -0.2px; padding-left: 6px; }
.osel span { flex: 1; }
.osel em { width: 29px; height: 100%; border-left: 2px solid #656565; display: flex; align-items: center; justify-content: center; }
.osel.grow { width: 316px; }
.osel.style { width: 312px; }
.osel.size { width: 155px; }
.osel.sharp { width: 134px; padding-left: 14px; padding-right: 8px; justify-self: center; }
.chev { width: 12px; height: 9px; color: #d4d4d4; flex: none; display: block; }
.chev.dim { color: #6e6e6e; width: 14px; height: 9px; }
.aa { display: flex; align-items: flex-start; font-family: "Liberation Serif", serif; font-size: 24px; color: #cfcfcf; height: 36px; line-height: 24px; }
.aa span + span { margin-top: 12px; }
.alg { width: 49px; height: 53px; display: flex; align-items: center; justify-content: center; justify-self: end; border: 2px solid transparent; border-radius: 5px; }
.alg.on { background: #343434; border-color: #4a4a4a; }
.swatch { width: 56px; height: 36px; background: #f3f3f3; border: 2px solid #2a2a2a; justify-self: end; }

.under { flex: 1; display: flex; min-height: 0; }
.doc { flex: none; width: 2178px; display: flex; flex-direction: column; }
.tabrow { flex: none; height: 58px; background: #414141; border-bottom: 2px solid #363636; }
.doctab { height: 100%; width: 396px; background: #535353; display: flex; align-items: center; justify-content: space-between; padding: 0 20px 0 14px; font-size: 22px; font-weight: 600; color: #e8e8e8; letter-spacing: -0.4px; border-right: 1px solid #404040; }
.tabx { font-weight: 400; font-size: 28px; color: #a0a0a0; }

.ruler-top { flex: none; height: 38px; display: flex; background: #4a4a4a; }
.corner { flex: none; width: 38px; background: linear-gradient(90deg, #424242, #4a4a4a); position: relative; }
.corner::after { content: ""; position: absolute; left: 0; right: 8px; top: 29px; height: 2px; background: repeating-linear-gradient(90deg, #7d7d7d 0 2px, transparent 2px 5px); }
.hruler {
  flex: 1; display: flex; overflow: hidden; padding-left: 11.600px;
  background-image: repeating-linear-gradient(90deg, #7b7b7b 0 1px, transparent 1px 14.880px);
  background-size: 100% 6px; background-repeat: no-repeat; background-position: 0 100%;
  background-origin: content-box;
}
.hruler span { flex: none; width: 74.400px; height: 38px; border-left: 1px solid #7c7c7c; padding-left: 5px; font: 24px/40px Roboto, sans-serif; color: #a9a9a9; letter-spacing: -0.2px; white-space: nowrap; }

.doc-main { flex: 1; min-height: 0; display: flex; }
.vruler {
  flex: none; width: 38px; overflow: hidden; background: linear-gradient(90deg, #424242, #4a4a4a); padding-top: 6px;
}
.vruler span { display: block; height: 74.300px; width: 26px; padding-left: 3px; border-top: 2px solid #747474; font: 20px/22px Inter, sans-serif; color: #a6a6a6; word-break: break-all; overflow: hidden; }
.vruler span.four { font-size: 17px; line-height: 16px; padding-left: 3px; padding-right: 12px; }
.canvas { flex: 1; position: relative; background: #282828; padding: 4px 0 0 458px; overflow: hidden; }
.page { width: 1427px; height: 100%; background: #fff; }
.guide { position: absolute; top: 0; bottom: 0; width: 2px; background: #55eeee; display: block; }
.hguide { position: absolute; left: 0; right: 0; top: 4px; height: 2px; background: #55eeee; display: block; }

.statusbar { flex: none; height: 34px; display: flex; background: #3e3e3e; font-size: 22px; line-height: 32px; color: #b4b4b4; }
.zoomval { width: 120px; background: #434343; text-align: center; color: #d8d8d8; padding-right: 4px; }
.docinfo { width: 366px; height: 32px; background: #535353; padding-left: 40px; display: flex; align-items: center; gap: 44px; white-space: nowrap; font-size: 21.500px; }

.dock-a { flex: none; width: 34px; background: #3f3f3f; border-right: 2px solid #333; }
.dock-b { flex: none; width: 82px; background: #484848; border-right: 2px solid #333; }

/* panels */
.panels { flex: none; width: 571px; display: flex; flex-direction: column; background: #535353; border-right: 2px solid #383838; }
.collapse-bar { flex: none; height: 24px; background: #414141; display: flex; align-items: center; justify-content: flex-end; padding-right: 15px; border-bottom: 2px solid #373737; }
.ptabs { flex: none; display: flex; background: #414141; border-bottom: 2px solid #373737; position: relative; align-items: stretch; }
.ptabs.first { height: 57px; }
.ptabs.second { height: 54px; border-top: 2px solid #373737; margin-top: 4px; }
.ptabs span { font-size: 19.500px; font-weight: 600; color: #b9b9b9; display: flex; align-items: center; justify-content: center; border-right: 2px solid #373737; letter-spacing: 0.1px; }
.t-color { width: 94px; } .t-swatch { width: 133px; } .t-grad { width: 138px; } .t-pat { width: 124px; }
.t-layers { width: 100px; } .t-chan { width: 137px; } .t-paths { width: 94px; }
.burger { position: absolute; right: 10px; top: 50%; margin-top: -8px; width: 20px; height: 16px; }
.colorpanel { flex: none; height: 209px; display: flex; padding: 14px 0 0 14px; }
.picker { width: 452px; height: 158px; position: relative; background: linear-gradient(to top, #000, transparent), linear-gradient(to right, #fff, #ff6a10); }
.pick-dot { position: absolute; left: 187px; top: 10px; width: 24px; height: 24px; border: 2px solid #000; border-radius: 50%; display: block; }
.huewrap { margin-left: 34px; display: flex; height: 158px; position: relative; }
.hue-arrow { position: absolute; left: -22px; top: 136px; }
.hue { width: 38px; height: 158px; background: linear-gradient(#f00 0, #f0f 17%, #00f 33%, #0ff 50%, #0f0 67%, #ff0 85%, #f00 100%); }
.filter-row { flex: none; height: 64px; border-bottom: 2px solid #3c3c3c; display: flex; align-items: center; padding-left: 208px; }
.fic { flex: none; margin-right: 26px; }
.pill-toggle { width: 18px; height: 28px; border-radius: 9px; background: #454545; position: relative; margin-left: -4px; width: 20px; }
.pill-toggle i { position: absolute; left: 1px; top: -6px; width: 18px; height: 16px; border-radius: 50%; background: #8e8e8e; display: block; }
.blend-row { flex: none; height: 56px; border-bottom: 2px solid #3c3c3c; display: flex; align-items: center; }
.blend-sel { width: 270px; height: 37px; border: 2px solid #5e5e5e; border-left: 0; border-radius: 0 5px 5px 0; margin-right: 7px; display: flex; align-items: center; justify-content: flex-end; padding-right: 10px; }
.dim-label { font-size: 19.500px; font-weight: 500; color: #7a7a7a; letter-spacing: 0.5px; white-space: nowrap; width: 84px; }
.pct { width: 103px; height: 36px; border: 2px solid #5c5c5c; border-radius: 5px; display: flex; align-items: center; color: #6c6c6c; font-size: 19.500px; font-weight: 500; padding-left: 7px; letter-spacing: .5px; }
.pct span { flex: 1; }
.pct em { width: 29px; height: 100%; border-left: 2px solid #5c5c5c; display: flex; align-items: center; justify-content: center; }
.lock-row { flex: none; height: 60px; display: flex; align-items: center; }
.lk1 { margin-left: 206px; }
.lk2 { margin-left: 20px; }
.dim-label.fill-l { margin-left: 50px; width: 41px; }
.layer-list { flex: 1; background: #4b4b4b; min-height: 0; }
.layer-row { width: 540px; height: 82px; background: #696969; display: flex; align-items: center; border-bottom: 0; box-shadow: 0 4px 0 #454545; }
.layer-name { width: 220px; text-align: right; font-size: 20px; font-weight: 500; color: #f0f0f0; margin-right: 266px; }
.panel-foot { flex: none; height: 52px; border-top: 2px solid #3a3a3a; background: #535353; display: flex; align-items: center; justify-content: flex-end; padding-right: 55px; gap: 30px; }
.panel-foot svg:first-child { margin-right: 10px; }
.fx { font: italic 26px/1 "Liberation Sans", sans-serif; color: #9c9c9c; margin-right: 10px; letter-spacing: 0; }

/* tools */
.toolbox { position: absolute; left: 30px; top: 126px; width: 76px; height: 1425px; background: #535353; border: 2px solid #3e3e3e; border-top: 0; box-shadow: 0 2px 6px rgba(0,0,0,.35); }
.tb-head { height: 26px; margin: 0 -2px; background: #444; border: 2px solid #3a3a3a; border-radius: 6px 6px 0 0; display: flex; align-items: center; justify-content: space-between; padding: 0 8px 0 8px; }
.tb-x { font-size: 26px; font-weight: 700; color: #bdbdbd; line-height: 20px; }
.tb-grip { height: 9px; margin: 6px 14px 0; background: repeating-linear-gradient(90deg, #6e6e6e 0 2px, transparent 2px 5px); }
.tool { height: 52px; display: flex; align-items: center; justify-content: center; position: relative; margin-top: 0; }
.tool:first-of-type { margin-top: 20px; }
.tb-grip + .tool { margin-top: 20px; }
.tool.more::after { content: ""; position: absolute; right: 11px; bottom: 11px; border-left: 6px solid transparent; border-bottom: 6px solid #b8b8b8; }
.tool.on { height: 50px; margin: 1px 4px; background: #343434; border: 2px solid #4a4a4a; border-radius: 5px; }
.tool.on.more::after { right: 7px; bottom: 8px; }
.ti { width: 36px; height: 36px; display: block; fill: #dcdcdc; }
.ti .s { fill: none; stroke: #dcdcdc; stroke-width: 2; }
.ti .s.b { stroke-width: 3; }
.colors { height: 134px; padding-top: 12px; position: relative; }
.defaults { display: flex; justify-content: space-between; padding: 0 8px 0 6px; }
.fgbg { position: relative; height: 60px; margin-top: 10px; }
.fgbg i { position: absolute; width: 39px; height: 39px; display: block; border: 3px solid #fff; outline: 2px solid #3d3d3d; }
.fg { left: 7px; top: 0; background: #e0b89c; }
.bg { left: 27px; top: 20px; background: #b38c7b; }
.tool.small { margin-top: 0; }

/* sticky note */
.note { position: absolute; left: 1894px; top: 92px; width: 600px; height: 725px; background: #ffc4c4; color: #111; padding: 35px 22px; box-shadow: 0 1px 5px rgba(0,0,0,.35); font-family: Inter, "Noto Sans CJK KR", sans-serif; }
.note h1 { margin: 0 0 4px; font-size: 38px; line-height: 44px; font-weight: 700; letter-spacing: -1.5px; }
.note p { margin: 0; font-size: 22.500px; line-height: 25px; letter-spacing: -0.8px; }
.note p.gap { margin-top: 23px; }

/* guide layout dialog */
.dialog { position: absolute; left: 1030px; top: 499px; width: 820px; height: 665px; background: #535353; border-radius: 14px; box-shadow: 0 30px 70px rgba(0,0,0,.5), 0 0 3px rgba(0,0,0,.4); overflow: visible; font-size: 24px; letter-spacing: -0.2px; }
.dlg-title { height: 58px; background: #d6d6d6; border-bottom: 2px solid #2f2f2f; border-radius: 14px 14px 0 0; color: #383838; font-weight: 600; font-size: 25px; line-height: 56px; text-align: center; letter-spacing: -0.4px; padding-left: 1px; }
.dlg-body { display: grid; grid-template-columns: 585px 159px; column-gap: 32px; padding: 20px 0 0 22px; }
.dlg-main label { color: #cfcfcf; }
.frow { display: flex; align-items: center; gap: 12px; height: 40px; margin-bottom: 27px; }
.frow label { width: 109px; text-align: right; }
.dsel { flex: 1; height: 100%; background: #454545; border: 2px solid #5f5f5f; border-radius: 5px; display: flex; align-items: center; justify-content: space-between; padding: 0 8px 0 13px; color: #e6e6e6; }
.frow.off .dsel { background: #4c4c4c; border-color: #5a5a5a; color: #858585; }
.group-pair { display: flex; justify-content: space-between; margin-top: 46px; }
.group { width: 283px; height: 190px; border: 3px solid #454545; border-radius: 2px; position: relative; padding-top: 25px; }
.legend { position: absolute; left: 32px; top: -15px; height: 24px; display: flex; align-items: center; gap: 18px; background: #535353; padding: 0 12px 0 5px; color: #d8d8d8; }
.cb { flex: none; width: 24px; height: 24px; border-radius: 5px; border: 2px solid #6e6e6e; display: block; }
.cb.on { background: #d8d8d8; border: 0; }
.cb svg { width: 24px; height: 24px; display: block; }
.grow-row { display: flex; align-items: center; gap: 9px; height: 35px; margin-bottom: 19px; }
.grow-row label { width: 107px; text-align: right; }
.inp { width: 118px; height: 35px; background: #434343; border: 2px solid #646464; padding-left: 4px; line-height: 31px; color: #ececec; }
.group.off .inp { background: #4c4c4c; border-color: #5c5c5c; }
.group.off .legend span { color: #d8d8d8; }
.group.off label { color: #858585; }
.group.margin { width: 585px; height: 128px; margin-top: 38px; padding: 25px 0 0 32px; }
.mgrid { display: grid; grid-template-columns: repeat(4, 118px); column-gap: 19.300px; row-gap: 17px; }
.mgrid label { line-height: 27px; }
.inp.focus { border-color: #0866cf; }
.dlg-bottom { display: flex; align-items: center; height: 24px; margin: 26px 0 0 -2px; }
.dlg-bottom span { margin-left: 20px; color: #dcdcdc; }
.dlg-bottom .lb1 { margin-right: 20px; }
.dlg-side { display: flex; flex-direction: column; }
.btn { height: 51px; width: 159px; border: 2px solid #717171; border-radius: 26px; display: flex; align-items: center; justify-content: center; color: #e6e6e6; margin-bottom: 20px; }
.btn.primary { border-color: #dcdcdc; }
.prev { display: flex; align-items: center; gap: 20px; margin-top: 5px; margin-left: -1px; color: #dcdcdc; }

/* dock */
.mac-dock {
  position: absolute; left: 530px; top: 1673px; width: 1820px; height: 116px; border-radius: 30px;
  background:
    linear-gradient(rgba(0,0,0,0), rgba(0,0,0,.09)),
    linear-gradient(90deg, #e6eaea 0, #e6ecec 72%, #c0c2c2 75%, #838383 79%, #7f7f7f 100%);
  box-shadow: 0 0 0 1px rgba(170,170,170,.5);
  display: flex; align-items: flex-start; padding: 18px 0 0 6px;
}
.app { flex: none; width: 98px; height: 76px; display: flex; justify-content: center; position: relative; }
.app > svg { width: 76px; height: 76px; display: block; overflow: visible; }
.app > svg.tall { width: 76px; height: 84px; margin-top: -8px; }
.app > svg.wide-thumb { width: 88px; height: 72px; margin-top: 5px; }
.app.run::after { content: ""; position: absolute; left: 45.500px; top: 87px; width: 7px; height: 7px; border-radius: 50%; background: #555; }
.app.black::after { background: #1a1a1a; }
.bdg { position: absolute; left: 62px; top: -9px; width: 36px; height: 36px; border-radius: 50%; background: rgba(247,56,48,.94); color: #fff; font-weight: 400; font-size: 21px; line-height: 36px; text-align: center; }
.bdg.wide { left: 47px; width: 44px; font-size: 20px; letter-spacing: -0.5px; }
.talk-t { font-size: 21px; font-weight: 800; fill: #ffe431; text-anchor: middle; font-family: Inter, sans-serif; letter-spacing: -0.5px; }
.adobe { font-family: "Open Sans", sans-serif; font-size: 44px; font-weight: 700; text-anchor: middle; letter-spacing: -1px; }
.ps { fill: #31a8ff; } .ai { fill: #ff9a00; } .pr { fill: #9999ff; } .ae { fill: #9999ff; }
.word-w { font-size: 22px; fill: #fff; font-weight: 500; text-anchor: middle; font-family: Inter, sans-serif; }
.dock-div { flex: none; width: 1px; height: 84px; background: #3f3f3f; margin: 0 20px 0 22px; display: block; align-self: flex-start; margin-top: 0; }
.defs { position: absolute; }
```
